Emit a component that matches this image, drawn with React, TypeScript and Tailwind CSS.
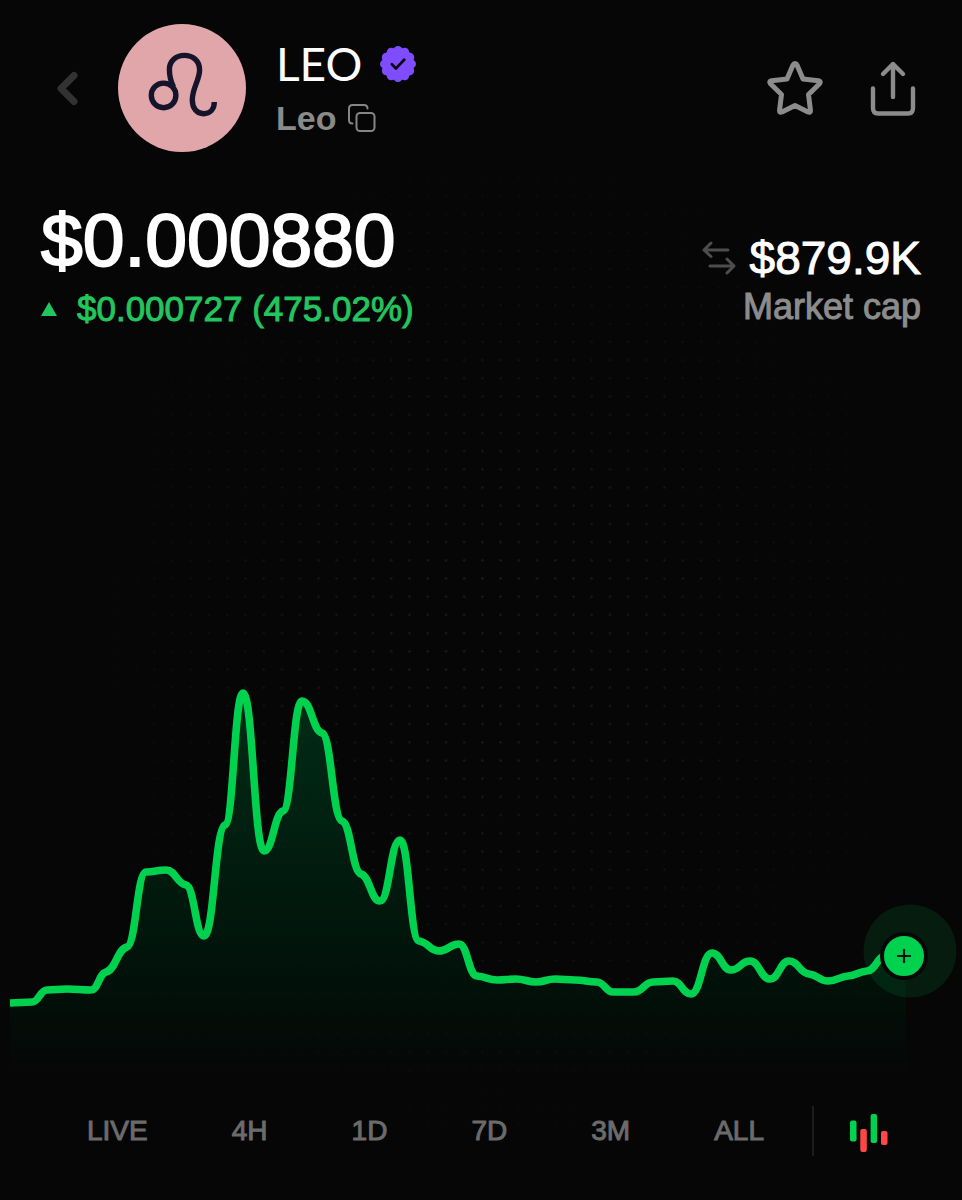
const ranges = ["LIVE", "4H", "1D", "7D", "3M", "ALL"];

// [x, y] samples in chart units
const points = [
  [10, 343], [32, 342], [47, 330], [67, 329], [91, 330], [106, 312], [127, 287],
  [146, 212], [166, 210], [186, 225], [204, 276], [225, 165], [243, 33], [264, 191],
  [283, 151], [302, 41], [322, 73], [342, 161], [361, 214], [380, 241], [400, 180],
  [419, 281], [439, 291], [459, 284], [477, 316], [497, 320], [516, 319], [536, 322],
  [555, 319], [575, 320], [597, 322], [613, 332], [634, 332], [653, 322], [673, 321],
  [691, 334], [712, 293], [731, 310], [750, 301], [770, 319], [789, 301], [809, 314],
  [828, 321], [848, 316], [867, 311], [886, 296], [906, 296],
];

function slopeAt(i: number) {
  if (i === 0 || i === points.length - 1) return 0;
  const [x0, y0] = points[i - 1];
  const [x1, y1] = points[i];
  const [x2, y2] = points[i + 1];
  const a = (y1 - y0) / (x1 - x0);
  const b = (y2 - y1) / (x2 - x1);
  if (a * b <= 0) return 0;
  return Math.sign(a) * Math.min(Math.abs(a), Math.abs(b), 1) * 0.25;
}

function buildLine() {
  let d = `M${points[0][0]} ${points[0][1]}`;
  for (let i = 1; i < points.length; i++) {
    const [x0, y0] = points[i - 1];
    const [x1, y1] = points[i];
    const c = (x1 - x0) * 0.48;
    d += `C${x0 + c} ${y0 + slopeAt(i - 1) * c} ${x1 - c} ${y1 - slopeAt(i) * c} ${x1} ${y1}`;
  }
  return d;
}

const line = buildLine();
const area = `${line}V420H10Z`;

function DotGrid() {
  return (
    <svg className="pointer-events-none absolute inset-0 -z-10 h-full w-full" aria-hidden="true">
      <defs>
        <pattern id="dots" x="309.3" y="442" width="18.22" height="18.2" patternUnits="userSpaceOnUse">
          <circle cx="9.1" cy="9.1" r="1.3" fill="#1d1d1d" />
        </pattern>
        <radialGradient id="dotFade" cx="0.52" cy="0.53" r="0.48">
          <stop offset="0.1" stopColor="#fff" />
          <stop offset="1" stopColor="#000" />
        </radialGradient>
        <mask id="dotMask">
          <rect width="100%" height="100%" fill="url(#dotFade)" />
        </mask>
      </defs>
      <rect width="100%" height="100%" fill="url(#dots)" mask="url(#dotMask)" />
    </svg>
  );
}

function LeoAvatar() {
  return (
    <svg viewBox="0 0 128 128" className="size-32 shrink-0" role="img" aria-label="Leo token">
      <circle cx="64" cy="64" r="64" fill="#e0a6aa" />
      <g fill="none" stroke="#14142b" strokeWidth="5.4">
        <circle cx="45.6" cy="71.4" r="12.3" />
        <path d="M55.5 63C52.6 57 51.4 51 51.4 45.5C51.4 37 58 31.4 66.3 31.4C75 31.4 81.6 37 81.6 46C81.6 56 74.3 64 74.3 76C74.3 84.5 79 89.7 85.6 89.7C92 89.7 96.3 85 96.3 78" />
      </g>
    </svg>
  );
}

const lobes = Array.from({ length: 12 }, (_, i) => (i * Math.PI) / 6);

function VerifiedBadge() {
  return (
    <svg viewBox="0 0 36 36" className="size-9" role="img" aria-label="Verified">
      <g fill="#7f4dff">
        <circle cx="18" cy="18" r="16.2" />
        {lobes.map((a) => (
          <circle key={a} cx={18 + Math.cos(a) * 13.6} cy={18 + Math.sin(a) * 13.6} r="4.4" />
        ))}
      </g>
      <path d="M11.8 18.2L16 22.4L24.2 13.8" fill="none" stroke="#0a0614" strokeWidth="2.8" strokeLinecap="round" strokeLinejoin="round" />
    </svg>
  );
}

function Header() {
  return (
    <header className="flex items-center pt-6 pr-[46px] pl-[54px]">
      <button type="button" aria-label="Back" className="shrink-0">
        <svg viewBox="0 0 24 36" className="h-9 w-6" fill="none" stroke="#323232" strokeWidth="7" strokeLinecap="round" strokeLinejoin="round">
          <path d="M20 5.5L7 18.5L20 31.5" />
        </svg>
      </button>
      <div className="ml-10">
        <LeoAvatar />
      </div>
      <div className="mt-1 ml-[30px] flex-1">
        <h1 className="flex items-center gap-[18px] font-[Lato] text-[46px] leading-[56px] text-white">
          LEO <VerifiedBadge />
        </h1>
        <div className="flex items-center gap-3 text-[34px] leading-[52px] font-bold text-[#8a8a8a]">
          Leo
          <button type="button" aria-label="Copy address">
            <svg viewBox="0 0 28 28" className="size-7" fill="none" stroke="#858585" strokeWidth="2" strokeLinecap="round">
              <rect x="8.5" y="9" width="18" height="18" rx="3.5" />
              <path d="M4.5 19.5C2.5 19.5 1 18 1 16V4.5C1 2.5 2.5 1 4.5 1H16C18 1 19.5 2.5 19.5 4.5" />
            </svg>
          </button>
        </div>
      </div>
      <div className="flex items-center gap-[46px]">
        <button type="button" aria-label="Add to favourites">
          <svg viewBox="0 0 58 58" className="size-[58px]" fill="none" stroke="#8c8c8c" strokeWidth="5" strokeLinejoin="round">
            <path d="M29 4.5Q30.3 4.500 31 6L37 20L52.5 21.8Q55.500 22.500 53.500 24.700L42.500 35.500L44.500 51.500Q44.500 54 42 53L29 46.500L16 53Q13.500 54 13.500 51.500L15.500 35.500L4.500 24.700Q2.500 22.500 5.500 21.800L21 20L27 6Q27.700 4.500 29 4.500Z" />
          </svg>
        </button>
        <button type="button" aria-label="Share">
          <svg viewBox="0 0 46 58" className="h-[58px] w-[46px]" fill="none" stroke="#8c8c8c" strokeWidth="4.4" strokeLinecap="round" strokeLinejoin="round">
            <path d="M23 38V5M13 15L23 5L33 15" />
            <path d="M3 29.5V49Q3 54.5 8 54.5H38Q43 54.5 43 49V29.5" />
          </svg>
        </button>
      </div>
    </header>
  );
}

function PriceSummary() {
  return (
    <section className="mt-12 flex items-end justify-between px-[41px]">
      <div>
        <p className="text-[75px] leading-[80px] text-white [-webkit-text-stroke:2px_white]">$0.000880</p>
        <p className="mt-2 flex items-center text-[35px] leading-[42px] text-[#22c55e] [-webkit-text-stroke:1px_#22c55e]">
          <svg viewBox="0 0 16 14" className="mr-5 h-[14px] w-4" fill="#22c55e" aria-hidden="true">
            <path d="M8 0L16 14H0Z" />
          </svg>
          $0.000727 (475.02%)
        </p>
      </div>
      <div className="pb-0.5 text-right">
        <p className="flex items-center justify-end gap-[14px] text-[46px] leading-[56px] text-white [-webkit-text-stroke:1px_white]">
          <button type="button" aria-label="Switch metric">
            <svg viewBox="0 0 34 34" className="size-[34px]" fill="none" stroke="#4d4d4d" strokeWidth="3" strokeLinecap="round" strokeLinejoin="round">
              <path d="M26 9H2M9 2L2 9L9 15.500M8 25H32M25 18L32 25L25 32" />
            </svg>
          </button>
          $879.9K
        </p>
        <p className="text-[36px] leading-[42px] text-[#8c8c8c] [-webkit-text-stroke:1px_#8c8c8c]">Market cap</p>
      </div>
    </section>
  );
}

function PriceChart() {
  return (
    <section className="relative mt-auto">
      <svg viewBox="0 0 962 420" className="block h-auto w-full" role="img" aria-label="LEO price chart">
        <defs>
          <linearGradient id="areaFill" gradientUnits="userSpaceOnUse" x1="0" y1="30" x2="0" y2="415">
            <stop offset="0" stopColor="#003018" stopOpacity="0.92" />
            <stop offset="0.45" stopColor="#001f10" stopOpacity="0.9" />
            <stop offset="0.78" stopColor="#00130a" stopOpacity="0.8" />
            <stop offset="1" stopColor="#00130a" stopOpacity="0" />
          </linearGradient>
        </defs>
        <path d={area} fill="url(#areaFill)" />
        <circle cx="910" cy="291" r="46.5" fill="#00d14f" fillOpacity="0.11" />
        <path d={line} fill="none" stroke="#00d14f" strokeWidth="7.6" strokeLinejoin="round" />
      </svg>
      <button
        type="button"
        aria-label="Buy"
        className="absolute top-[70.5%] left-[94%] flex size-12 -translate-x-1/2 -translate-y-1/2 items-center justify-center rounded-full border-4 border-[#060606] bg-[#00d14f]"
      >
        <svg viewBox="0 0 16 16" className="size-4" stroke="#04140a" strokeWidth="2.2" aria-hidden="true">
          <path d="M8 1V15M1 8H15" />
        </svg>
      </button>
    </section>
  );
}

function RangeBar() {
  return (
    <footer className="flex h-[120px] items-center pr-[74px] pb-[18px] pl-[87px]">
      <nav className="flex flex-1 justify-between" aria-label="Chart range">
        {ranges.map((range) => (
          <button key={range} type="button" className="text-[28px] leading-9 text-[#6b6b6b] [-webkit-text-stroke:1px_#6b6b6b]">
            {range}
          </button>
        ))}
      </nav>
      <div className="mr-9 ml-12 h-[50px] w-0.5 bg-[#1c1c1c]" />
      <button type="button" aria-label="Candlestick view">
        <svg viewBox="0 -4 38 42" className="h-[42px] w-[38px]" aria-hidden="true">
          <rect x="0" y="6.5" width="6.500" height="21" rx="2" fill="#00d14f" />
          <rect x="10.3" y="15" width="6.500" height="23" rx="2" fill="#ff4747" />
          <rect x="20.6" y="0" width="6.500" height="29" rx="2" fill="#00d14f" />
          <rect x="31" y="17" width="6.500" height="14" rx="2" fill="#ff4747" />
        </svg>
      </button>
    </footer>
  );
}

export default function App() {
  return (
    <main className="relative isolate flex min-h-screen flex-col overflow-hidden bg-[#060606] font-['Liberation_Sans',Arial,sans-serif]">
      <DotGrid />
      <Header />
      <PriceSummary />
      <PriceChart />
      <RangeBar />
    </main>
  );
}
